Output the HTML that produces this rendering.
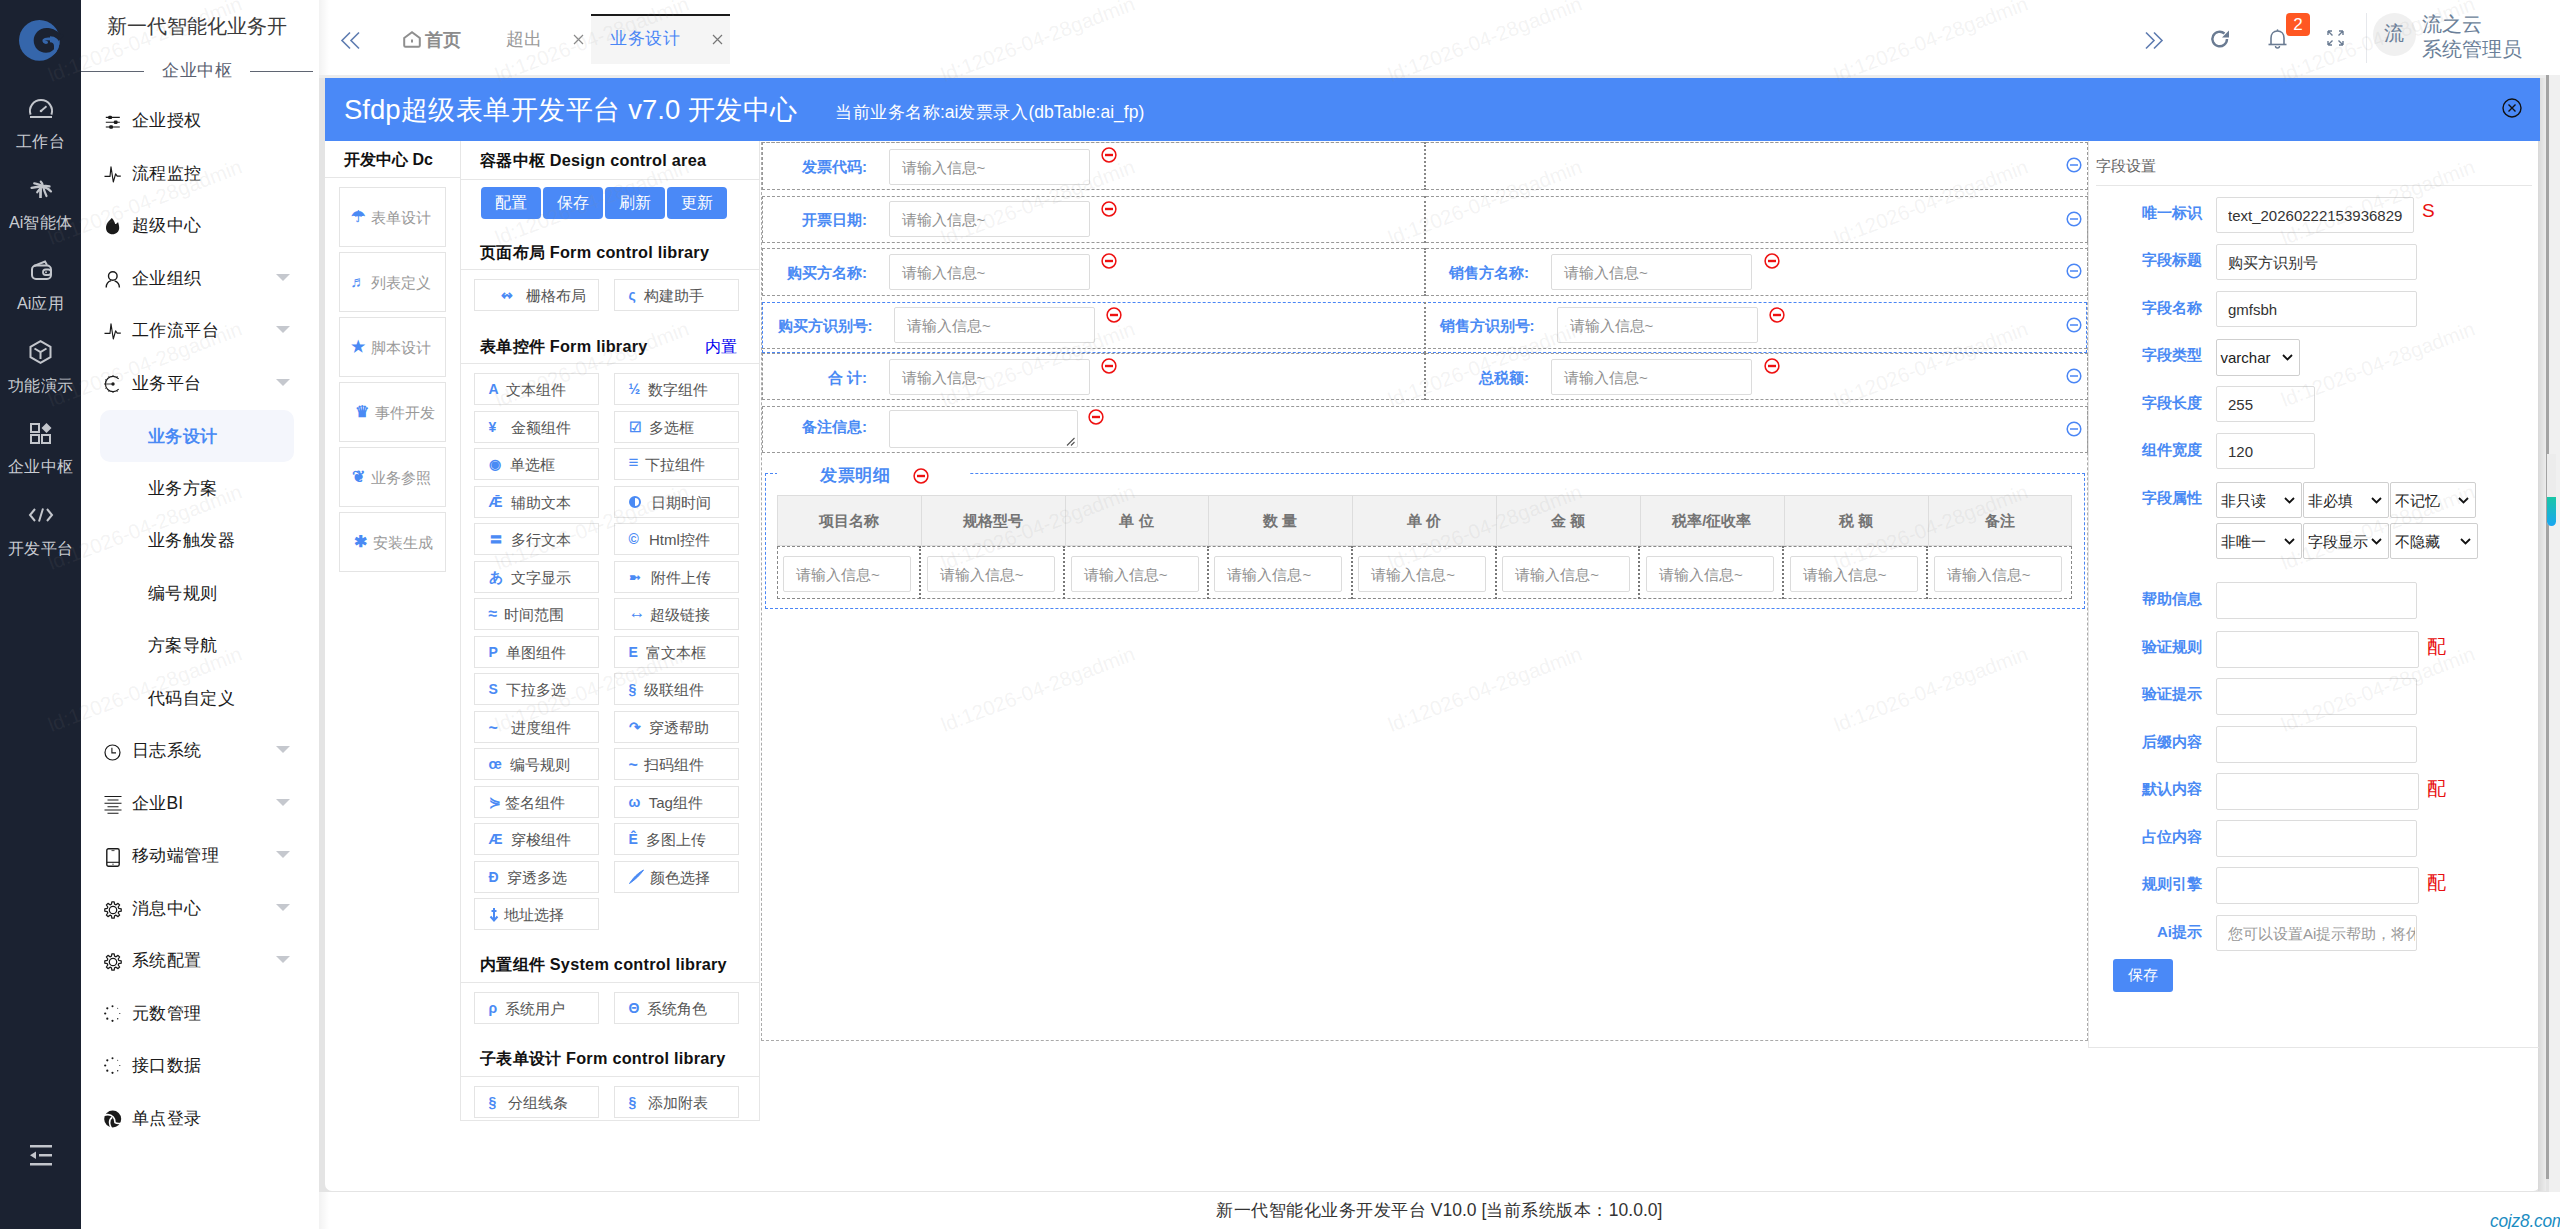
<!DOCTYPE html><html><head><meta charset="utf-8"><style>
*{box-sizing:border-box}
html,body{margin:0;padding:0}
body{width:2560px;height:1229px;overflow:hidden;position:relative;background:#fff;font-family:"Liberation Sans",sans-serif}
.t{position:absolute;white-space:nowrap}
.b{position:absolute}
svg{position:absolute;overflow:visible}
</style></head><body>
<div class="b" style="left:0px;top:0px;width:81px;height:1229px;background:#1b2231"></div>
<svg style="left:18px;top:18px" width="45" height="45" viewBox="0 0 45 45">
<defs><clipPath id="lc"><circle cx="21.4" cy="22.4" r="20.4"/></clipPath></defs>
<circle cx="21.4" cy="22.4" r="20.4" fill="#3566ab"/>
<path fill="#1b2231" d="M42.5 16.2 C38 11.5 33 10 28.5 10 C21 10 15.7 16 15.7 22.5 C15.7 29.5 21 34.8 28 34.8 C33.5 34.8 37.5 31 38.5 26 L46 17 Z"/>
<g clip-path="url(#lc)">
<path fill="none" stroke="#3566ab" stroke-width="6" d="M39 36 L39 28 C39 23.5 36 21.2 32 21.2"/>
<path fill="none" stroke="#3566ab" stroke-width="2.8" stroke-linecap="round" d="M33 21 C29.5 20.6 27 20.6 26 22 C25.3 23.3 26.5 24.8 28.6 24.4"/>
</g>
</svg>
<svg style="left:29px;top:99px" width="24" height="19" viewBox="0 0 24 19"><path d="M1.6 15.6 A11 11 0 1 1 22.4 15.6" fill="none" stroke="#c3c6cc" stroke-width="2"/><line x1="1" y1="18" x2="23" y2="18" stroke="#c3c6cc" stroke-width="2"/><line x1="12" y1="12" x2="17.5" y2="7.2" stroke="#c3c6cc" stroke-width="1.8"/><circle cx="12" cy="12" r="1.3" fill="#c3c6cc"/></svg>
<svg style="left:28px;top:176px" width="28" height="26" viewBox="0 0 28 26"><g fill="none" stroke="#c3c6cc" stroke-linecap="round">
<path d="M14.8 10.2 C11 10.5 7 11 3.6 11.8" stroke-width="2.4"/>
<path d="M14.5 9.8 C11 8.5 8.5 7.6 6.2 7.4" stroke-width="2.2"/>
<path d="M14.8 10 C14.5 8 13.8 6.5 12.8 5.6" stroke-width="2.2"/>
<path d="M14.8 10.2 C17 9.6 19.5 9.8 21.5 10.4" stroke-width="2.3"/>
<path d="M15 10.6 C18 11.5 21 13.3 23 15.4" stroke-width="2.2"/>
<path d="M14.5 10.8 C12.5 12 10.5 14 9.2 16.3" stroke-width="2.2"/>
<path d="M15.2 11 C16 14 17.3 17.5 18.5 20" stroke-width="2.2"/>
</g><path d="M11.2 12.5 L14 12.5 L13.8 22 L11.2 22Z" fill="#c3c6cc"/></svg>
<svg style="left:31px;top:260px" width="21" height="20" viewBox="0 0 21 20"><path d="M3 6 L14 1.5 L16 5" fill="none" stroke="#c3c6cc" stroke-width="2"/><rect x="1" y="5.5" width="19" height="13.5" rx="4" fill="none" stroke="#c3c6cc" stroke-width="2"/><rect x="12" y="9.5" width="8" height="5.5" rx="2.7" fill="none" stroke="#c3c6cc" stroke-width="1.8"/><circle cx="15" cy="12.2" r="1" fill="#c3c6cc"/></svg>
<svg style="left:29px;top:340px" width="23" height="24" viewBox="0 0 23 24"><path d="M11.5 1.2 L21.5 6.8 L21.5 17.2 L11.5 22.8 L1.5 17.2 L1.5 6.8 Z" fill="none" stroke="#c3c6cc" stroke-width="2"/><path d="M5.5 8.5 L11.5 12 L17.5 8.5 M11.5 12 L11.5 19" fill="none" stroke="#c3c6cc" stroke-width="2"/></svg>
<svg style="left:30px;top:423px" width="22" height="21" viewBox="0 0 22 21"><rect x="1" y="1" width="8" height="8" fill="none" stroke="#c3c6cc" stroke-width="2"/><rect x="1" y="12" width="8" height="8" fill="none" stroke="#c3c6cc" stroke-width="2"/><rect x="12" y="12" width="8" height="8" fill="none" stroke="#c3c6cc" stroke-width="2"/><path d="M16.5 0 L21.5 5 L16.5 10 L11.5 5Z" fill="#c3c6cc"/></svg>
<svg style="left:29px;top:508px" width="24" height="14" viewBox="0 0 24 14"><path d="M6 1 L1 7 L6 13 M18 1 L23 7 L18 13 M14 0.5 L10 13.5" fill="none" stroke="#c3c6cc" stroke-width="2"/></svg>
<div class="t" style="left:0;width:81px;text-align:center;top:131px;font-size:16.25px;line-height:20px;color:#c9ccd2"><span style="font-size:16px;letter-spacing:0.25px">工作台</span></div>
<div class="t" style="left:0;width:81px;text-align:center;top:212px;font-size:16.25px;line-height:20px;color:#c9ccd2">Ai<span style="font-size:16px;letter-spacing:0.25px">智能体</span></div>
<div class="t" style="left:0;width:81px;text-align:center;top:293px;font-size:16.25px;line-height:20px;color:#c9ccd2">Ai<span style="font-size:16px;letter-spacing:0.25px">应用</span></div>
<div class="t" style="left:0;width:81px;text-align:center;top:375px;font-size:16.25px;line-height:20px;color:#c9ccd2"><span style="font-size:16px;letter-spacing:0.25px">功能演示</span></div>
<div class="t" style="left:0;width:81px;text-align:center;top:456px;font-size:16.25px;line-height:20px;color:#c9ccd2"><span style="font-size:16px;letter-spacing:0.25px">企业中枢</span></div>
<div class="t" style="left:0;width:81px;text-align:center;top:538px;font-size:16.25px;line-height:20px;color:#c9ccd2"><span style="font-size:16px;letter-spacing:0.25px">开发平台</span></div>
<svg style="left:30px;top:1145px" width="22" height="21" viewBox="0 0 22 21"><rect x="0" y="0" width="22" height="2.5" fill="#c3c6cc"/><rect x="9" y="9" width="13" height="2.5" fill="#c3c6cc"/><rect x="0" y="18" width="22" height="2.5" fill="#c3c6cc"/><path d="M0 10.2 L6 6.5 L6 14Z" fill="#c3c6cc"/></svg>
<div class="t" style="left:107px;top:16px;font-size:20px;line-height:20px;color:#3a3a3a;font-weight:normal;">新一代智能化业务开</div>
<div class="t" style="left:162px;top:62px;font-size:17.5px;line-height:17.5px;color:#5a6070;font-weight:normal;"><span style="font-size:17px;letter-spacing:0.5px">企业中枢</span></div>
<div class="b" style="left:81px;top:70.5px;width:63px;height:1.3px;background:#5f6572"></div>
<div class="b" style="left:250px;top:70.5px;width:63px;height:1.3px;background:#5f6572"></div>
<svg style="left:104px;top:114px" width="17" height="16" viewBox="0 0 17 16"><path d="M1.8 3.4H15.8 M1.8 8.2H15.8" stroke="#1a1a1a" stroke-width="1.1"/><path d="M1.8 13H15.8" stroke="#666" stroke-width="1.6"/><rect x="4.2" y="1.7" width="3.8" height="3.4" rx="1.2" fill="#1a1a1a"/><rect x="9.8" y="6.5" width="3.8" height="3.4" rx="1.2" fill="#1a1a1a"/><rect x="5.2" y="11.3" width="3.8" height="3.4" rx="1.2" fill="#1a1a1a"/></svg>
<div class="t" style="left:131.5px;top:110px;font-size:17.5px;line-height:17.5px;color:#1a1a1a;font-weight:normal;line-height:20px"><span style="font-size:17px;letter-spacing:0.5px">企业授权</span></div>
<svg style="left:104px;top:165.5px" width="18" height="18" viewBox="0 0 18 18"><path d="M0.5 10.4 H6 L7 0.8 L9.3 16 L11.6 7.8 L13.2 10.1 H16.8" fill="none" stroke="#1a1a1a" stroke-width="1.15" stroke-linejoin="round"/></svg>
<div class="t" style="left:131.5px;top:162.5px;font-size:17.5px;line-height:17.5px;color:#1a1a1a;font-weight:normal;line-height:20px"><span style="font-size:17px;letter-spacing:0.5px">流程监控</span></div>
<svg style="left:105px;top:216.5px" width="16" height="18" viewBox="0 0 16 18"><path d="M6.8 1 C4.5 3.5 1 6 1 11 C1 14.8 4 17.3 7.5 17.3 C11 17.3 14.2 14.8 14.2 11 C14.2 8.5 13.5 6.5 13 5 C12 6.5 11.2 7 10.2 7 C9.5 4.5 8.5 2.5 6.8 1Z" fill="#1a1a1a"/></svg>
<div class="t" style="left:131.5px;top:215px;font-size:17.5px;line-height:17.5px;color:#1a1a1a;font-weight:normal;line-height:20px"><span style="font-size:17px;letter-spacing:0.5px">超级中心</span></div>
<svg style="left:104px;top:269.5px" width="17" height="18" viewBox="0 0 17 18"><circle cx="8.8" cy="6" r="4.3" fill="none" stroke="#1a1a1a" stroke-width="1.4"/><path d="M2.2 17.5 C2.2 13.8 4.2 11.4 7.2 10.6 M10.6 10.8 C13.5 11.7 15.4 14 15.4 17.5" fill="none" stroke="#1a1a1a" stroke-width="1.4"/></svg>
<div class="t" style="left:131.5px;top:267.5px;font-size:17.5px;line-height:17.5px;color:#1a1a1a;font-weight:normal;line-height:20px"><span style="font-size:17px;letter-spacing:0.5px">企业组织</span></div>
<svg style="left:276px;top:273.5px" width="14" height="8" viewBox="0 0 14 8"><path d="M0 0H14L7 7Z" fill="#c5c8ce"/></svg>
<svg style="left:104px;top:323px" width="18" height="18" viewBox="0 0 18 18"><path d="M0.5 10.4 H6 L7 0.8 L9.3 16 L11.6 7.8 L13.2 10.1 H16.8" fill="none" stroke="#1a1a1a" stroke-width="1.15" stroke-linejoin="round"/></svg>
<div class="t" style="left:131.5px;top:320px;font-size:17.5px;line-height:17.5px;color:#1a1a1a;font-weight:normal;line-height:20px"><span style="font-size:17px;letter-spacing:0.5px">工作流平台</span></div>
<svg style="left:276px;top:326px" width="14" height="8" viewBox="0 0 14 8"><path d="M0 0H14L7 7Z" fill="#c5c8ce"/></svg>
<svg style="left:104px;top:375.0px" width="18" height="18" viewBox="0 0 18 18"><path d="M14.65 3.91 A7.6 7.6 0 1 0 14.65 14.09" fill="none" stroke="#1a1a1a" stroke-width="1.2"/><path d="M12.80 15.58L13.50 16.79M9.00 16.60L9.00 18.00M5.20 15.58L4.50 16.79M2.42 12.80L1.21 13.50M1.40 9.00L0.00 9.00M2.42 5.20L1.21 4.50M5.20 2.42L4.50 1.21M9.00 1.40L9.00 0.00M12.80 2.42L13.50 1.21" stroke="#1a1a1a" stroke-width="0.8"/><path d="M1.6 9H9" stroke="#1a1a1a" stroke-width="0.9"/><circle cx="9" cy="9" r="1.7" fill="#1a1a1a"/></svg>
<div class="t" style="left:131.5px;top:372.5px;font-size:17.5px;line-height:17.5px;color:#1a1a1a;font-weight:normal;line-height:20px"><span style="font-size:17px;letter-spacing:0.5px">业务平台</span></div>
<svg style="left:276px;top:378.5px" width="14" height="8" viewBox="0 0 14 8"><path d="M0 0H14L7 7Z" fill="#c5c8ce"/></svg>
<svg style="left:104px;top:743.5px" width="17" height="17" viewBox="0 0 17 17"><circle cx="8.5" cy="8.5" r="7.5" fill="none" stroke="#1a1a1a" stroke-width="1.2"/><path d="M7.9 3.8V8.9H12" fill="none" stroke="#1a1a1a" stroke-width="1.1"/></svg>
<div class="t" style="left:131.5px;top:740px;font-size:17.5px;line-height:17.5px;color:#1a1a1a;font-weight:normal;line-height:20px"><span style="font-size:17px;letter-spacing:0.5px">日志系统</span></div>
<svg style="left:276px;top:746px" width="14" height="8" viewBox="0 0 14 8"><path d="M0 0H14L7 7Z" fill="#c5c8ce"/></svg>
<svg style="left:104px;top:794.5px" width="18" height="19" viewBox="0 0 18 19"><path d="M0.5 1.5H17.5 M3.5 5H14.5 M0.5 8.3H17.5 M3.5 11.7H14.5 M0.5 15H17.5 M3.5 18.3H14.5" stroke="#1a1a1a" stroke-width="1.1"/></svg>
<div class="t" style="left:131.5px;top:792.5px;font-size:17.5px;line-height:17.5px;color:#1a1a1a;font-weight:normal;line-height:20px"><span style="font-size:17px;letter-spacing:0.5px">企业</span>BI</div>
<svg style="left:276px;top:798.5px" width="14" height="8" viewBox="0 0 14 8"><path d="M0 0H14L7 7Z" fill="#c5c8ce"/></svg>
<svg style="left:106px;top:847.5px" width="14" height="19" viewBox="0 0 14 19"><rect x="0.8" y="0.8" width="12.4" height="17.4" rx="1.6" fill="none" stroke="#1a1a1a" stroke-width="1.4"/><path d="M1 14.3H13" stroke="#1a1a1a" stroke-width="1.1"/><path d="M5.5 2.6H8.5" stroke="#1a1a1a" stroke-width="0.8"/><circle cx="7" cy="16.2" r="0.6" fill="#1a1a1a"/></svg>
<div class="t" style="left:131.5px;top:845px;font-size:17.5px;line-height:17.5px;color:#1a1a1a;font-weight:normal;line-height:20px"><span style="font-size:17px;letter-spacing:0.5px">移动端管理</span></div>
<svg style="left:276px;top:851px" width="14" height="8" viewBox="0 0 14 8"><path d="M0 0H14L7 7Z" fill="#c5c8ce"/></svg>
<svg style="left:103px;top:899.5px" width="20" height="20" viewBox="0 0 20 20"><path d="M8.45 4.20 L8.84 1.78 L11.16 1.78 L11.55 4.20 L13.00 4.80 L15.00 3.37 L16.63 5.00 L15.20 7.00 L15.80 8.45 L18.22 8.84 L18.22 11.16 L15.80 11.55 L15.20 13.00 L16.63 15.00 L15.00 16.63 L13.00 15.20 L11.55 15.80 L11.16 18.22 L8.84 18.22 L8.45 15.80 L7.00 15.20 L5.00 16.63 L3.37 15.00 L4.80 13.00 L4.20 11.55 L1.78 11.16 L1.78 8.84 L4.20 8.45 L4.80 7.00 L3.37 5.00 L5.00 3.37 L7.00 4.80Z" fill="none" stroke="#1a1a1a" stroke-width="1.25" stroke-linejoin="round"/><circle cx="10" cy="10" r="3.7" fill="none" stroke="#1a1a1a" stroke-width="1.25"/></svg>
<div class="t" style="left:131.5px;top:897.5px;font-size:17.5px;line-height:17.5px;color:#1a1a1a;font-weight:normal;line-height:20px"><span style="font-size:17px;letter-spacing:0.5px">消息中心</span></div>
<svg style="left:276px;top:903.5px" width="14" height="8" viewBox="0 0 14 8"><path d="M0 0H14L7 7Z" fill="#c5c8ce"/></svg>
<svg style="left:103px;top:952px" width="20" height="20" viewBox="0 0 20 20"><path d="M8.45 4.20 L8.84 1.78 L11.16 1.78 L11.55 4.20 L13.00 4.80 L15.00 3.37 L16.63 5.00 L15.20 7.00 L15.80 8.45 L18.22 8.84 L18.22 11.16 L15.80 11.55 L15.20 13.00 L16.63 15.00 L15.00 16.63 L13.00 15.20 L11.55 15.80 L11.16 18.22 L8.84 18.22 L8.45 15.80 L7.00 15.20 L5.00 16.63 L3.37 15.00 L4.80 13.00 L4.20 11.55 L1.78 11.16 L1.78 8.84 L4.20 8.45 L4.80 7.00 L3.37 5.00 L5.00 3.37 L7.00 4.80Z" fill="none" stroke="#1a1a1a" stroke-width="1.25" stroke-linejoin="round"/><circle cx="10" cy="10" r="3.7" fill="none" stroke="#1a1a1a" stroke-width="1.25"/></svg>
<div class="t" style="left:131.5px;top:950px;font-size:17.5px;line-height:17.5px;color:#1a1a1a;font-weight:normal;line-height:20px"><span style="font-size:17px;letter-spacing:0.5px">系统配置</span></div>
<svg style="left:276px;top:956px" width="14" height="8" viewBox="0 0 14 8"><path d="M0 0H14L7 7Z" fill="#c5c8ce"/></svg>
<svg style="left:104px;top:1004.5px" width="17" height="17" viewBox="0 0 17 17"><g fill="#1a1a1a"><circle cx="8.5" cy="1.2" r="1"/><circle cx="3.3" cy="3.3" r="1.1"/><circle cx="1.2" cy="8.5" r="1.1"/><circle cx="3.3" cy="13.7" r="1.1"/><circle cx="8.5" cy="15.8" r="1.1"/><circle cx="13.7" cy="13.7" r="0.7"/><circle cx="15.8" cy="8.5" r="0.6"/><circle cx="13.7" cy="3.3" r="0.5"/></g></svg>
<div class="t" style="left:131.5px;top:1002.5px;font-size:17.5px;line-height:17.5px;color:#1a1a1a;font-weight:normal;line-height:20px"><span style="font-size:17px;letter-spacing:0.5px">元数管理</span></div>
<svg style="left:104px;top:1057px" width="17" height="17" viewBox="0 0 17 17"><g fill="#1a1a1a"><circle cx="8.5" cy="1.2" r="1"/><circle cx="3.3" cy="3.3" r="1.1"/><circle cx="1.2" cy="8.5" r="1.1"/><circle cx="3.3" cy="13.7" r="1.1"/><circle cx="8.5" cy="15.8" r="1.1"/><circle cx="13.7" cy="13.7" r="0.7"/><circle cx="15.8" cy="8.5" r="0.6"/><circle cx="13.7" cy="3.3" r="0.5"/></g></svg>
<div class="t" style="left:131.5px;top:1055px;font-size:17.5px;line-height:17.5px;color:#1a1a1a;font-weight:normal;line-height:20px"><span style="font-size:17px;letter-spacing:0.5px">接口数据</span></div>
<svg style="left:98px;top:1103.0px" width="30" height="30" viewBox="0 0 30 30"><circle cx="14.7" cy="16.1" r="8.5" fill="#1a1a1a"/><path d="M5.5 12.6 C9 11.2 13 11.6 15.2 14 C17 16 16.8 18 17 19.6 C18.5 20.6 21 20.6 24 20.2" fill="none" stroke="#fff" stroke-width="1.6"/><path d="M14.2 14.4 C12.3 15.5 11.4 17.5 11.6 20 C11.8 22 12.4 23.5 13.3 25.2" fill="none" stroke="#fff" stroke-width="1.6"/></svg>
<div class="t" style="left:131.5px;top:1107.5px;font-size:17.5px;line-height:17.5px;color:#1a1a1a;font-weight:normal;line-height:20px"><span style="font-size:17px;letter-spacing:0.5px">单点登录</span></div>
<div class="b" style="left:100px;top:410px;width:194px;height:52px;background:#f4f6fc;border-radius:10px"></div>
<div class="t" style="left:147.5px;top:426px;font-size:17.5px;line-height:17.5px;color:#4a8af4;font-weight:bold;line-height:20px"><span style="font-size:17px;letter-spacing:0.5px">业务设计</span></div>
<div class="t" style="left:147.5px;top:477.5px;font-size:17.5px;line-height:17.5px;color:#1a1a1a;font-weight:normal;line-height:20px"><span style="font-size:17px;letter-spacing:0.5px">业务方案</span></div>
<div class="t" style="left:147.5px;top:530px;font-size:17.5px;line-height:17.5px;color:#1a1a1a;font-weight:normal;line-height:20px"><span style="font-size:17px;letter-spacing:0.5px">业务触发器</span></div>
<div class="t" style="left:147.5px;top:582.5px;font-size:17.5px;line-height:17.5px;color:#1a1a1a;font-weight:normal;line-height:20px"><span style="font-size:17px;letter-spacing:0.5px">编号规则</span></div>
<div class="t" style="left:147.5px;top:635px;font-size:17.5px;line-height:17.5px;color:#1a1a1a;font-weight:normal;line-height:20px"><span style="font-size:17px;letter-spacing:0.5px">方案导航</span></div>
<div class="t" style="left:147.5px;top:687.5px;font-size:17.5px;line-height:17.5px;color:#1a1a1a;font-weight:normal;line-height:20px"><span style="font-size:17px;letter-spacing:0.5px">代码自定义</span></div>
<div class="b" style="left:319px;top:0;width:10px;height:1229px;background:linear-gradient(90deg,rgba(0,0,0,0.05),rgba(0,0,0,0))"></div>
<svg style="left:341px;top:32px" width="19" height="17" viewBox="0 0 19 17"><path d="M9 0.5 L1 8.5 L9 16.5 M18 0.5 L10 8.5 L18 16.5" fill="none" stroke="#5e7cb0" stroke-width="1.6"/></svg>
<svg style="left:403px;top:31px" width="18" height="17" viewBox="0 0 18 17"><path d="M1.2 7 L9 1.2 L16.8 7 V14.5 Q16.8 15.8 15.5 15.8 H2.5 Q1.2 15.8 1.2 14.5Z" fill="none" stroke="#8f8f8f" stroke-width="2"/><path d="M9 8.5V11.5" stroke="#8f8f8f" stroke-width="2"/></svg>
<div class="t" style="left:425px;top:29.5px;font-size:18px;line-height:18px;color:#8c8c8c;font-weight:bold;line-height:20px">首页</div>
<div class="t" style="left:505.5px;top:28.5px;font-size:18.5px;line-height:18.5px;color:#9a9a9a;font-weight:normal;line-height:20px"><span style="font-size:18px;letter-spacing:0.5px">超出</span></div>
<svg style="left:573px;top:34px" width="11" height="11" viewBox="0 0 11 11"><path d="M1 1L10 10M10 1L1 10" stroke="#8a8a8a" stroke-width="1.2"/></svg>
<div class="b" style="left:591px;top:14px;width:139px;height:50px;background:#f5f5f5;border-top:2px solid #1a1a1a"></div>
<div class="t" style="left:610px;top:27.5px;font-size:17.5px;line-height:17.5px;color:#4a86f5;font-weight:normal;line-height:20px"><span style="font-size:17px;letter-spacing:0.5px">业务设计</span></div>
<svg style="left:712px;top:34px" width="11" height="11" viewBox="0 0 11 11"><path d="M1 1L10 10M10 1L1 10" stroke="#777" stroke-width="1.2"/></svg>
<svg style="left:2145px;top:32px" width="18" height="17" viewBox="0 0 18 17"><path d="M1 0.5 L9 8.5 L1 16.5 M9 0.5 L17 8.5 L9 16.5" fill="none" stroke="#5e7cb0" stroke-width="1.6"/></svg>
<svg style="left:2211px;top:30px" width="19" height="18" viewBox="0 0 19 18"><path d="M16 9 A7.3 7.3 0 1 1 13.5 3.5" fill="none" stroke="#6a7b92" stroke-width="2.4"/><path d="M18 0.5 V7.5 H11Z" fill="#6a7b92"/></svg>
<svg style="left:2268px;top:29px" width="19" height="20" viewBox="0 0 19 20"><path d="M3 15.5 V9 C3 5 5.5 2 9.5 2 C13.5 2 16 5 16 9 V15.5" fill="none" stroke="#6a7b92" stroke-width="1.6"/><path d="M0.5 15.5H18.5" stroke="#6a7b92" stroke-width="1.6"/><path d="M7.5 17 A2 2 0 0 0 11.5 17" fill="none" stroke="#6a7b92" stroke-width="1.4"/><circle cx="9.5" cy="1.2" r="0.9" fill="#6a7b92"/></svg>
<div class="b" style="left:2286px;top:13px;width:24px;height:23px;background:#ff5722;border-radius:4px"></div>
<div class="t" style="left:2286px;top:15px;font-size:17px;line-height:17px;color:#fff;font-weight:normal;width:24px;text-align:center;line-height:19px">2</div>
<svg style="left:2327px;top:30px" width="17" height="16" viewBox="0 0 17 16"><path d="M1 1 L5.5 5.5 M1 1 H5 M1 1 V5 M16 1 L11.5 5.5 M16 1 H12 M16 1 V5 M1 15 L5.5 10.5 M1 15 H5 M1 15 V11 M16 15 L11.5 10.5 M16 15 H12 M16 15 V11" fill="none" stroke="#6a7b92" stroke-width="1.4"/></svg>
<div class="b" style="left:2366px;top:13px;width:1px;height:50px;background:#e6e8ec"></div>
<div class="b" style="left:2372.5px;top:13px;width:43px;height:43px;background:#f0f0f0;border-radius:50%"></div>
<div class="t" style="left:2384px;top:23px;font-size:20px;line-height:20px;color:#6b7f99;font-weight:normal;line-height:21px">流</div>
<div class="t" style="left:2422px;top:14px;font-size:20px;line-height:20px;color:#6b7f99;font-weight:normal;line-height:21px">流之云</div>
<div class="t" style="left:2422px;top:39px;font-size:20px;line-height:20px;color:#6b7f99;font-weight:normal;line-height:21px">系统管理员</div>
<div class="b" style="left:319px;top:75px;width:2230px;height:1117px;background:#e4e4e4"></div>
<div class="b" style="left:319px;top:75px;width:2230px;height:3px;background:#ececec"></div>
<div class="b" style="left:325px;top:78px;width:2215px;height:1113px;background:#fff;border-radius:0 0 7px 7px"></div>
<div class="b" style="left:2538px;top:78px;width:8px;height:1113px;background:linear-gradient(90deg,#d8d8d8,#ececec)"></div>
<div class="b" style="left:2546px;top:75px;width:3px;height:1104px;background:#a3a3a3"></div>
<div class="b" style="left:2549px;top:75px;width:11px;height:1117px;background:#f0f0f0"></div>
<div class="b" style="left:2547px;top:454px;width:9px;height:72px;background:#ececec;border-radius:0 0 5px 5px"></div>
<div class="b" style="left:2547px;top:497px;width:9px;height:29px;background:linear-gradient(180deg,#19c6a6,#1aa6f2);border-radius:0 0 5px 5px"></div>
<div class="b" style="left:325px;top:78px;width:2215px;height:63px;background:#4a89f7"></div>
<div class="t" style="left:344px;top:94.5px;font-size:27.5px;line-height:27.5px;color:#fff;font-weight:normal;line-height:30px">Sfdp<span style="font-size:27px;letter-spacing:0.5px">超级表单开发平台</span> v7.0 <span style="font-size:27px;letter-spacing:0.5px">开发中心</span></div>
<div class="t" style="left:835px;top:100.5px;font-size:17.5px;line-height:17.5px;color:#fff;font-weight:normal;line-height:22px"><span style="font-size:17px;letter-spacing:0.5px">当前业务名称</span>:ai<span style="font-size:17px;letter-spacing:0.5px">发票录入</span>(dbTable:ai_fp)</div>
<svg style="left:2502px;top:98px" width="20" height="20" viewBox="0 0 20 20"><circle cx="10" cy="10" r="9" fill="none" stroke="#111" stroke-width="1.4"/><path d="M6.5 6.5L13.5 13.5M13.5 6.5L6.5 13.5" stroke="#111" stroke-width="1.4"/></svg>
<div class="t" style="left:1216px;top:1199px;font-size:17.5px;line-height:17.5px;color:#333;font-weight:normal;line-height:22px"><span style="font-size:17px;letter-spacing:0.5px">新一代智能化业务开发平台</span> V10.0 [<span style="font-size:17px;letter-spacing:0.5px">当前系统版本：</span>10.0.0]</div>
<div class="t" style="left:2490px;top:1210px;font-size:18px;line-height:18px;color:#1b8dc2;font-weight:normal;font-style:italic;line-height:22px;letter-spacing:-0.2px;transform:scaleX(0.96);transform-origin:0 0">cojz8.com</div>
<div class="t" style="left:344px;top:151px;font-size:16px;line-height:16px;color:#111;font-weight:bold;line-height:18px">开发中心 Dc</div>
<div class="b" style="left:325px;top:177px;width:135px;height:1px;background:#e6e6e6"></div>
<div class="b" style="left:338.5px;top:187px;width:107.5px;height:59.5px;border:1px solid #e4e4e4"></div>
<div class="t" style="left:371px;top:209px;font-size:15px;line-height:15px;color:#999;font-weight:normal;line-height:17px">表单设计</div>
<div class="t" style="left:349px;top:208px;font-size:15.5px;line-height:18px;color:#4a8af4;font-weight:bold;width:18px;text-align:center">☂</div>
<div class="b" style="left:338.5px;top:252px;width:107.5px;height:59.5px;border:1px solid #e4e4e4"></div>
<div class="t" style="left:371px;top:274px;font-size:15px;line-height:15px;color:#999;font-weight:normal;line-height:17px">列表定义</div>
<div class="t" style="left:349px;top:273px;font-size:15.5px;line-height:18px;color:#4a8af4;font-weight:bold;width:18px;text-align:center">♬</div>
<div class="b" style="left:338.5px;top:317px;width:107.5px;height:59.5px;border:1px solid #e4e4e4"></div>
<div class="t" style="left:371px;top:339px;font-size:15px;line-height:15px;color:#999;font-weight:normal;line-height:17px">脚本设计</div>
<div class="t" style="left:349px;top:338px;font-size:15.5px;line-height:18px;color:#4a8af4;font-weight:bold;width:18px;text-align:center">★</div>
<div class="b" style="left:338.5px;top:382px;width:107.5px;height:59.5px;border:1px solid #e4e4e4"></div>
<div class="t" style="left:375px;top:404px;font-size:15px;line-height:15px;color:#999;font-weight:normal;line-height:17px">事件开发</div>
<div class="t" style="left:353px;top:403px;font-size:15.5px;line-height:18px;color:#4a8af4;font-weight:bold;width:18px;text-align:center">♛</div>
<div class="b" style="left:338.5px;top:447px;width:107.5px;height:59.5px;border:1px solid #e4e4e4"></div>
<div class="t" style="left:371px;top:469px;font-size:15px;line-height:15px;color:#999;font-weight:normal;line-height:17px">业务参照</div>
<div class="t" style="left:349px;top:468px;font-size:15.5px;line-height:18px;color:#4a8af4;font-weight:bold;width:18px;text-align:center">❦</div>
<div class="b" style="left:338.5px;top:512px;width:107.5px;height:59.5px;border:1px solid #e4e4e4"></div>
<div class="t" style="left:373px;top:534px;font-size:15px;line-height:15px;color:#999;font-weight:normal;line-height:17px">安装生成</div>
<div class="t" style="left:351px;top:533px;font-size:15.5px;line-height:18px;color:#4a8af4;font-weight:bold;width:18px;text-align:center">✱</div>
<div class="b" style="left:460px;top:141px;width:300px;height:980px;border-left:1px solid #e6e6e6;border-right:1px solid #e6e6e6;border-bottom:1px solid #e6e6e6"></div>
<div class="t" style="left:480px;top:151px;font-size:16.25px;line-height:16.25px;color:#111;font-weight:bold;line-height:18px;letter-spacing:0.25px"><span style="font-size:16px;letter-spacing:0.25px">容器中枢</span> Design control area</div>
<div class="b" style="left:461px;top:179px;width:298px;height:1px;background:#e6e6e6"></div>
<div class="b" style="left:481px;top:187px;width:60px;height:32px;background:#4a89f7;border-radius:4px"></div>
<div class="t" style="left:481px;top:194px;font-size:16px;line-height:16px;color:#fff;font-weight:normal;width:60px;text-align:center;line-height:18px">配置</div>
<div class="b" style="left:543px;top:187px;width:60px;height:32px;background:#4a89f7;border-radius:4px"></div>
<div class="t" style="left:543px;top:194px;font-size:16px;line-height:16px;color:#fff;font-weight:normal;width:60px;text-align:center;line-height:18px">保存</div>
<div class="b" style="left:605px;top:187px;width:60px;height:32px;background:#4a89f7;border-radius:4px"></div>
<div class="t" style="left:605px;top:194px;font-size:16px;line-height:16px;color:#fff;font-weight:normal;width:60px;text-align:center;line-height:18px">刷新</div>
<div class="b" style="left:667px;top:187px;width:60px;height:32px;background:#4a89f7;border-radius:4px"></div>
<div class="t" style="left:667px;top:194px;font-size:16px;line-height:16px;color:#fff;font-weight:normal;width:60px;text-align:center;line-height:18px">更新</div>
<div class="t" style="left:480px;top:242.5px;font-size:16.25px;line-height:16.25px;color:#111;font-weight:bold;line-height:18px;letter-spacing:0.25px"><span style="font-size:16px;letter-spacing:0.25px">页面布局</span> Form control library</div>
<div class="b" style="left:461px;top:269px;width:298px;height:1px;background:#e6e6e6"></div>
<div class="b" style="left:474px;top:279px;width:124.5px;height:32px;border:1px solid #e4e4e4"></div>
<div class="t" style="left:501px;top:286px;font-size:14px;line-height:18px;color:#4a8af4;font-weight:bold">↭</div>
<div class="t" style="left:526.2px;top:287px;font-size:15px;line-height:15px;color:#555;font-weight:normal;line-height:17px">栅格布局</div>
<div class="b" style="left:614px;top:279px;width:124.5px;height:32px;border:1px solid #e4e4e4"></div>
<div class="t" style="left:628.5px;top:286px;font-size:14px;line-height:18px;color:#4a8af4;font-weight:bold">ς</div>
<div class="t" style="left:643.8px;top:287px;font-size:15px;line-height:15px;color:#555;font-weight:normal;line-height:17px">构建助手</div>
<div class="t" style="left:480px;top:336.5px;font-size:16.25px;line-height:16.25px;color:#111;font-weight:bold;line-height:18px;letter-spacing:0.25px"><span style="font-size:16px;letter-spacing:0.25px">表单控件</span> Form library</div>
<div class="b" style="left:461px;top:363px;width:298px;height:1px;background:#e6e6e6"></div>
<div class="t" style="left:705px;top:337.5px;font-size:16px;line-height:16px;color:#0000ee;font-weight:normal;line-height:18px">内置</div>
<div class="b" style="left:474px;top:373.0px;width:124.5px;height:32px;border:1px solid #e4e4e4"></div>
<div class="t" style="left:488.5px;top:380.0px;font-size:14px;line-height:18px;color:#4a8af4;font-weight:bold">A</div>
<div class="t" style="left:506.4px;top:381.0px;font-size:15px;line-height:15px;color:#555;font-weight:normal;line-height:17px">文本组件</div>
<div class="b" style="left:614px;top:373.0px;width:124.5px;height:32px;border:1px solid #e4e4e4"></div>
<div class="t" style="left:628.5px;top:380.0px;font-size:14px;line-height:18px;color:#4a8af4;font-weight:bold">½</div>
<div class="t" style="left:648px;top:381.0px;font-size:15px;line-height:15px;color:#555;font-weight:normal;line-height:17px">数字组件</div>
<div class="b" style="left:474px;top:410.5px;width:124.5px;height:32px;border:1px solid #e4e4e4"></div>
<div class="t" style="left:488.5px;top:417.5px;font-size:14px;line-height:18px;color:#4a8af4;font-weight:bold">¥</div>
<div class="t" style="left:510.8px;top:418.5px;font-size:15px;line-height:15px;color:#555;font-weight:normal;line-height:17px">金额组件</div>
<div class="b" style="left:614px;top:410.5px;width:124.5px;height:32px;border:1px solid #e4e4e4"></div>
<div class="t" style="left:628.5px;top:417.5px;font-size:14px;line-height:18px;color:#4a8af4;font-weight:bold">☑</div>
<div class="t" style="left:648.8px;top:418.5px;font-size:15px;line-height:15px;color:#555;font-weight:normal;line-height:17px">多选框</div>
<div class="b" style="left:474px;top:448.0px;width:124.5px;height:32px;border:1px solid #e4e4e4"></div>
<div class="t" style="left:488.5px;top:455.0px;font-size:14px;line-height:18px;color:#4a8af4;font-weight:bold">◉</div>
<div class="t" style="left:509.8px;top:456.0px;font-size:15px;line-height:15px;color:#555;font-weight:normal;line-height:17px">单选框</div>
<div class="b" style="left:614px;top:448.0px;width:124.5px;height:32px;border:1px solid #e4e4e4"></div>
<div class="t" style="left:628.5px;top:454.0px;font-size:17px;line-height:18px;color:#4a8af4;font-weight:bold">≡</div>
<div class="t" style="left:645px;top:456.0px;font-size:15px;line-height:15px;color:#555;font-weight:normal;line-height:17px">下拉组件</div>
<div class="b" style="left:474px;top:485.5px;width:124.5px;height:32px;border:1px solid #e4e4e4"></div>
<div class="t" style="left:488.5px;top:492.5px;font-size:14px;line-height:18px;color:#4a8af4;font-weight:bold">Ǣ</div>
<div class="t" style="left:510.6px;top:493.5px;font-size:15px;line-height:15px;color:#555;font-weight:normal;line-height:17px">辅助文本</div>
<div class="b" style="left:614px;top:485.5px;width:124.5px;height:32px;border:1px solid #e4e4e4"></div>
<svg style="left:628.5px;top:495.5px" width="12" height="12" viewBox="0 0 12 12"><circle cx="6" cy="6" r="5" fill="none" stroke="#4a8af4" stroke-width="2"/><path d="M6 1 A5 5 0 0 0 6 11Z" fill="#4a8af4"/></svg>
<div class="t" style="left:650.8px;top:493.5px;font-size:15px;line-height:15px;color:#555;font-weight:normal;line-height:17px">日期时间</div>
<div class="b" style="left:474px;top:523.0px;width:124.5px;height:32px;border:1px solid #e4e4e4"></div>
<div class="t" style="left:488.5px;top:530.0px;font-size:14px;line-height:18px;color:#4a8af4;font-weight:bold">〓</div>
<div class="t" style="left:511px;top:531.0px;font-size:15px;line-height:15px;color:#555;font-weight:normal;line-height:17px">多行文本</div>
<div class="b" style="left:614px;top:523.0px;width:124.5px;height:32px;border:1px solid #e4e4e4"></div>
<div class="t" style="left:628.5px;top:530.0px;font-size:14px;line-height:18px;color:#4a8af4;font-weight:bold">©</div>
<div class="t" style="left:649px;top:531.0px;font-size:15px;line-height:15px;color:#555;font-weight:normal;line-height:17px">Html控件</div>
<div class="b" style="left:474px;top:560.5px;width:124.5px;height:32px;border:1px solid #e4e4e4"></div>
<div class="t" style="left:488.5px;top:567.5px;font-size:14px;line-height:18px;color:#4a8af4;font-weight:bold">あ</div>
<div class="t" style="left:510.6px;top:568.5px;font-size:15px;line-height:15px;color:#555;font-weight:normal;line-height:17px">文字显示</div>
<div class="b" style="left:614px;top:560.5px;width:124.5px;height:32px;border:1px solid #e4e4e4"></div>
<div class="t" style="left:628.5px;top:567.5px;font-size:14px;line-height:18px;color:#4a8af4;font-weight:bold">➼</div>
<div class="t" style="left:650.8px;top:568.5px;font-size:15px;line-height:15px;color:#555;font-weight:normal;line-height:17px">附件上传</div>
<div class="b" style="left:474px;top:598.0px;width:124.5px;height:32px;border:1px solid #e4e4e4"></div>
<div class="t" style="left:488.5px;top:605.0px;font-size:16px;line-height:18px;color:#4a8af4;font-weight:bold">≈</div>
<div class="t" style="left:504px;top:606.0px;font-size:15px;line-height:15px;color:#555;font-weight:normal;line-height:17px">时间范围</div>
<div class="b" style="left:614px;top:598.0px;width:124.5px;height:32px;border:1px solid #e4e4e4"></div>
<div class="t" style="left:628.5px;top:604.0px;font-size:17px;line-height:18px;color:#4a8af4;font-weight:bold">↔</div>
<div class="t" style="left:650.3px;top:606.0px;font-size:15px;line-height:15px;color:#555;font-weight:normal;line-height:17px">超级链接</div>
<div class="b" style="left:474px;top:635.5px;width:124.5px;height:32px;border:1px solid #e4e4e4"></div>
<div class="t" style="left:488.5px;top:642.5px;font-size:14px;line-height:18px;color:#4a8af4;font-weight:bold">P</div>
<div class="t" style="left:506px;top:643.5px;font-size:15px;line-height:15px;color:#555;font-weight:normal;line-height:17px">单图组件</div>
<div class="b" style="left:614px;top:635.5px;width:124.5px;height:32px;border:1px solid #e4e4e4"></div>
<div class="t" style="left:628.5px;top:642.5px;font-size:14px;line-height:18px;color:#4a8af4;font-weight:bold">E</div>
<div class="t" style="left:646px;top:643.5px;font-size:15px;line-height:15px;color:#555;font-weight:normal;line-height:17px">富文本框</div>
<div class="b" style="left:474px;top:673.0px;width:124.5px;height:32px;border:1px solid #e4e4e4"></div>
<div class="t" style="left:488.5px;top:680.0px;font-size:14px;line-height:18px;color:#4a8af4;font-weight:bold">S</div>
<div class="t" style="left:506px;top:681.0px;font-size:15px;line-height:15px;color:#555;font-weight:normal;line-height:17px">下拉多选</div>
<div class="b" style="left:614px;top:673.0px;width:124.5px;height:32px;border:1px solid #e4e4e4"></div>
<div class="t" style="left:628.5px;top:680.0px;font-size:14px;line-height:18px;color:#4a8af4;font-weight:bold">§</div>
<div class="t" style="left:644px;top:681.0px;font-size:15px;line-height:15px;color:#555;font-weight:normal;line-height:17px">级联组件</div>
<div class="b" style="left:474px;top:710.5px;width:124.5px;height:32px;border:1px solid #e4e4e4"></div>
<div class="t" style="left:488.5px;top:718.5px;font-size:16px;line-height:18px;color:#4a8af4;font-weight:bold">~</div>
<div class="t" style="left:510.6px;top:718.5px;font-size:15px;line-height:15px;color:#555;font-weight:normal;line-height:17px">进度组件</div>
<div class="b" style="left:614px;top:710.5px;width:124.5px;height:32px;border:1px solid #e4e4e4"></div>
<div class="t" style="left:628.5px;top:717.5px;font-size:14px;line-height:18px;color:#4a8af4;font-weight:bold">↷</div>
<div class="t" style="left:649px;top:718.5px;font-size:15px;line-height:15px;color:#555;font-weight:normal;line-height:17px">穿透帮助</div>
<div class="b" style="left:474px;top:748.0px;width:124.5px;height:32px;border:1px solid #e4e4e4"></div>
<div class="t" style="left:488.5px;top:755.0px;font-size:14px;line-height:18px;color:#4a8af4;font-weight:bold">œ</div>
<div class="t" style="left:510px;top:756.0px;font-size:15px;line-height:15px;color:#555;font-weight:normal;line-height:17px">编号规则</div>
<div class="b" style="left:614px;top:748.0px;width:124.5px;height:32px;border:1px solid #e4e4e4"></div>
<div class="t" style="left:628.5px;top:756.0px;font-size:16px;line-height:18px;color:#4a8af4;font-weight:bold">~</div>
<div class="t" style="left:643.7px;top:756.0px;font-size:15px;line-height:15px;color:#555;font-weight:normal;line-height:17px">扫码组件</div>
<div class="b" style="left:474px;top:785.5px;width:124.5px;height:32px;border:1px solid #e4e4e4"></div>
<div class="t" style="left:488.5px;top:792.5px;font-size:14px;line-height:18px;color:#4a8af4;font-weight:bold">⋟</div>
<div class="t" style="left:504.6px;top:793.5px;font-size:15px;line-height:15px;color:#555;font-weight:normal;line-height:17px">签名组件</div>
<div class="b" style="left:614px;top:785.5px;width:124.5px;height:32px;border:1px solid #e4e4e4"></div>
<div class="t" style="left:628.5px;top:792.5px;font-size:14px;line-height:18px;color:#4a8af4;font-weight:bold">ω</div>
<div class="t" style="left:648.7px;top:793.5px;font-size:15px;line-height:15px;color:#555;font-weight:normal;line-height:17px">Tag组件</div>
<div class="b" style="left:474px;top:823.0px;width:124.5px;height:32px;border:1px solid #e4e4e4"></div>
<div class="t" style="left:488.5px;top:830.0px;font-size:14px;line-height:18px;color:#4a8af4;font-weight:bold">Æ</div>
<div class="t" style="left:510.8px;top:831.0px;font-size:15px;line-height:15px;color:#555;font-weight:normal;line-height:17px">穿梭组件</div>
<div class="b" style="left:614px;top:823.0px;width:124.5px;height:32px;border:1px solid #e4e4e4"></div>
<div class="t" style="left:628.5px;top:830.0px;font-size:14px;line-height:18px;color:#4a8af4;font-weight:bold">Ê</div>
<div class="t" style="left:645.6px;top:831.0px;font-size:15px;line-height:15px;color:#555;font-weight:normal;line-height:17px">多图上传</div>
<div class="b" style="left:474px;top:860.5px;width:124.5px;height:32px;border:1px solid #e4e4e4"></div>
<div class="t" style="left:488.5px;top:867.5px;font-size:14px;line-height:18px;color:#4a8af4;font-weight:bold">Đ</div>
<div class="t" style="left:506.5px;top:868.5px;font-size:15px;line-height:15px;color:#555;font-weight:normal;line-height:17px">穿透多选</div>
<div class="b" style="left:614px;top:860.5px;width:124.5px;height:32px;border:1px solid #e4e4e4"></div>
<svg style="left:628.5px;top:868.5px" width="15" height="15" viewBox="0 0 15 15"><path d="M0.5 14.5 C3 11 6 6 14.5 1 C11 6 7 10 0.5 14.5Z" fill="#4a8af4" stroke="#4a8af4" stroke-width="1"/></svg>
<div class="t" style="left:650px;top:868.5px;font-size:15px;line-height:15px;color:#555;font-weight:normal;line-height:17px">颜色选择</div>
<div class="b" style="left:474px;top:898.0px;width:124.5px;height:32px;border:1px solid #e4e4e4"></div>
<svg style="left:488.5px;top:907.0px" width="10" height="15" viewBox="0 0 10 15"><path d="M5 1V13 M1.5 9.5 L5 13.5 L8.5 9.5 M2.5 4H7.5" fill="none" stroke="#4a8af4" stroke-width="2"/></svg>
<div class="t" style="left:504px;top:906.0px;font-size:15px;line-height:15px;color:#555;font-weight:normal;line-height:17px">地址选择</div>
<div class="t" style="left:480px;top:955px;font-size:16.25px;line-height:16.25px;color:#111;font-weight:bold;line-height:18px;letter-spacing:0.25px"><span style="font-size:16px;letter-spacing:0.25px">内置组件</span> System control library</div>
<div class="b" style="left:461px;top:982px;width:298px;height:1px;background:#e6e6e6"></div>
<div class="b" style="left:474px;top:992px;width:124.5px;height:32px;border:1px solid #e4e4e4"></div>
<div class="t" style="left:488.5px;top:999px;font-size:14px;line-height:18px;color:#4a8af4;font-weight:bold">ρ</div>
<div class="t" style="left:504.6px;top:1000px;font-size:15px;line-height:15px;color:#555;font-weight:normal;line-height:17px">系统用户</div>
<div class="b" style="left:614px;top:992px;width:124.5px;height:32px;border:1px solid #e4e4e4"></div>
<div class="t" style="left:628.5px;top:999px;font-size:14px;line-height:18px;color:#4a8af4;font-weight:bold">Θ</div>
<div class="t" style="left:647px;top:1000px;font-size:15px;line-height:15px;color:#555;font-weight:normal;line-height:17px">系统角色</div>
<div class="t" style="left:480px;top:1049px;font-size:16.25px;line-height:16.25px;color:#111;font-weight:bold;line-height:18px;letter-spacing:0.25px"><span style="font-size:16px;letter-spacing:0.25px">子表单设计</span> Form control library</div>
<div class="b" style="left:461px;top:1076px;width:298px;height:1px;background:#e6e6e6"></div>
<div class="b" style="left:474px;top:1085.5px;width:124.5px;height:32px;border:1px solid #e4e4e4"></div>
<div class="t" style="left:488.5px;top:1092.5px;font-size:14px;line-height:18px;color:#4a8af4;font-weight:bold">§</div>
<div class="t" style="left:508px;top:1093.5px;font-size:15px;line-height:15px;color:#555;font-weight:normal;line-height:17px">分组线条</div>
<div class="b" style="left:614px;top:1085.5px;width:124.5px;height:32px;border:1px solid #e4e4e4"></div>
<div class="t" style="left:628.5px;top:1092.5px;font-size:14px;line-height:18px;color:#4a8af4;font-weight:bold">§</div>
<div class="t" style="left:648.4px;top:1093.5px;font-size:15px;line-height:15px;color:#555;font-weight:normal;line-height:17px">添加附表</div>
<div class="b" style="left:761px;top:142px;width:1327px;height:899px;border:1px dashed #aaa"></div>
<div class="b" style="left:762px;top:142px;width:1326px;height:48px;border:1px dashed #999"></div>
<div class="b" style="left:1424px;top:142px;width:2px;height:48px;border-left:2px dotted #888"></div>
<div class="t" style="left:667px;width:200px;text-align:right;top:157.5px;font-size:15px;line-height:17px;color:#4a8af4;font-weight:bold">发票代码:</div>
<div class="b" style="left:888.5px;top:148.5px;width:201px;height:36px;border:1px solid #dcdcdc;border-radius:2px;background:#fff"></div>
<div class="t" style="left:901.5px;top:158.5px;font-size:15px;line-height:15px;color:#8f8f8f;font-weight:normal;line-height:17px">请输入信息~</div>
<svg style="left:1100.5px;top:147px" width="16" height="16" viewBox="0 0 16 16"><circle cx="8" cy="8" r="6.9" fill="none" stroke="#ee1111" stroke-width="1.5"/><path d="M4 8H12" stroke="#ee1111" stroke-width="2.4"/></svg>
<svg style="left:2065.5px;top:157px" width="16" height="16" viewBox="0 0 16 16"><circle cx="8" cy="8" r="6.8" fill="none" stroke="#4a86f5" stroke-width="1.5"/><path d="M4 8H12" stroke="#4a86f5" stroke-width="1.5"/></svg>
<div class="b" style="left:762px;top:195.5px;width:1326px;height:47px;border:1px dashed #999"></div>
<div class="b" style="left:1424px;top:195.5px;width:2px;height:47px;border-left:2px dotted #888"></div>
<div class="t" style="left:667px;width:200px;text-align:right;top:211.0px;font-size:15px;line-height:17px;color:#4a8af4;font-weight:bold">开票日期:</div>
<div class="b" style="left:888.5px;top:200.5px;width:201px;height:36px;border:1px solid #dcdcdc;border-radius:2px;background:#fff"></div>
<div class="t" style="left:901.5px;top:210.5px;font-size:15px;line-height:15px;color:#8f8f8f;font-weight:normal;line-height:17px">请输入信息~</div>
<svg style="left:1100.5px;top:200.5px" width="16" height="16" viewBox="0 0 16 16"><circle cx="8" cy="8" r="6.9" fill="none" stroke="#ee1111" stroke-width="1.5"/><path d="M4 8H12" stroke="#ee1111" stroke-width="2.4"/></svg>
<svg style="left:2065.5px;top:210.5px" width="16" height="16" viewBox="0 0 16 16"><circle cx="8" cy="8" r="6.8" fill="none" stroke="#4a86f5" stroke-width="1.5"/><path d="M4 8H12" stroke="#4a86f5" stroke-width="1.5"/></svg>
<div class="b" style="left:762px;top:248px;width:1326px;height:47.5px;border:1px dashed #999"></div>
<div class="b" style="left:1424px;top:248px;width:2px;height:47.5px;border-left:2px dotted #888"></div>
<div class="t" style="left:667px;width:200px;text-align:right;top:263.5px;font-size:15px;line-height:17px;color:#4a8af4;font-weight:bold">购买方名称:</div>
<div class="b" style="left:888.5px;top:253.5px;width:201px;height:36px;border:1px solid #dcdcdc;border-radius:2px;background:#fff"></div>
<div class="t" style="left:901.5px;top:263.5px;font-size:15px;line-height:15px;color:#8f8f8f;font-weight:normal;line-height:17px">请输入信息~</div>
<svg style="left:1100.5px;top:253px" width="16" height="16" viewBox="0 0 16 16"><circle cx="8" cy="8" r="6.9" fill="none" stroke="#ee1111" stroke-width="1.5"/><path d="M4 8H12" stroke="#ee1111" stroke-width="2.4"/></svg>
<div class="t" style="left:1329px;width:200px;text-align:right;top:263.5px;font-size:15px;line-height:17px;color:#4a8af4;font-weight:bold">销售方名称:</div>
<div class="b" style="left:1551px;top:253.5px;width:201px;height:36px;border:1px solid #dcdcdc;border-radius:2px;background:#fff"></div>
<div class="t" style="left:1564px;top:263.5px;font-size:15px;line-height:15px;color:#8f8f8f;font-weight:normal;line-height:17px">请输入信息~</div>
<svg style="left:1763.5px;top:253px" width="16" height="16" viewBox="0 0 16 16"><circle cx="8" cy="8" r="6.9" fill="none" stroke="#ee1111" stroke-width="1.5"/><path d="M4 8H12" stroke="#ee1111" stroke-width="2.4"/></svg>
<svg style="left:2065.5px;top:263px" width="16" height="16" viewBox="0 0 16 16"><circle cx="8" cy="8" r="6.8" fill="none" stroke="#4a86f5" stroke-width="1.5"/><path d="M4 8H12" stroke="#4a86f5" stroke-width="1.5"/></svg>
<div class="b" style="left:762px;top:301.5px;width:1325px;height:51.5px;border:1px dashed #4a86f5;border-left-width:1px"></div>
<div class="b" style="left:762px;top:348.0px;width:1325px;height:1px;border-top:1px dashed #999"></div>
<div class="b" style="left:1424px;top:301.5px;width:2px;height:51.5px;border-left:2px dotted #888"></div>
<div class="t" style="left:672.5px;width:200px;text-align:right;top:317.0px;font-size:15px;line-height:17px;color:#4a8af4;font-weight:bold">购买方识别号:</div>
<div class="b" style="left:894.0px;top:306.5px;width:201px;height:36px;border:1px solid #dcdcdc;border-radius:2px;background:#fff"></div>
<div class="t" style="left:907.0px;top:316.5px;font-size:15px;line-height:15px;color:#8f8f8f;font-weight:normal;line-height:17px">请输入信息~</div>
<svg style="left:1106.0px;top:306.5px" width="16" height="16" viewBox="0 0 16 16"><circle cx="8" cy="8" r="6.9" fill="none" stroke="#ee1111" stroke-width="1.5"/><path d="M4 8H12" stroke="#ee1111" stroke-width="2.4"/></svg>
<div class="t" style="left:1334.5px;width:200px;text-align:right;top:317.0px;font-size:15px;line-height:17px;color:#4a8af4;font-weight:bold">销售方识别号:</div>
<div class="b" style="left:1556.5px;top:306.5px;width:201px;height:36px;border:1px solid #dcdcdc;border-radius:2px;background:#fff"></div>
<div class="t" style="left:1569.5px;top:316.5px;font-size:15px;line-height:15px;color:#8f8f8f;font-weight:normal;line-height:17px">请输入信息~</div>
<svg style="left:1769.0px;top:306.5px" width="16" height="16" viewBox="0 0 16 16"><circle cx="8" cy="8" r="6.9" fill="none" stroke="#ee1111" stroke-width="1.5"/><path d="M4 8H12" stroke="#ee1111" stroke-width="2.4"/></svg>
<svg style="left:2065.5px;top:316.5px" width="16" height="16" viewBox="0 0 16 16"><circle cx="8" cy="8" r="6.8" fill="none" stroke="#4a86f5" stroke-width="1.5"/><path d="M4 8H12" stroke="#4a86f5" stroke-width="1.5"/></svg>
<div class="b" style="left:762px;top:353px;width:1326px;height:47px;border:1px dashed #999"></div>
<div class="b" style="left:1424px;top:353px;width:2px;height:47px;border-left:2px dotted #888"></div>
<div class="t" style="left:667px;width:200px;text-align:right;top:368.5px;font-size:15px;line-height:17px;color:#4a8af4;font-weight:bold">合  计:</div>
<div class="b" style="left:888.5px;top:359.3px;width:201px;height:36px;border:1px solid #dcdcdc;border-radius:2px;background:#fff"></div>
<div class="t" style="left:901.5px;top:369.3px;font-size:15px;line-height:15px;color:#8f8f8f;font-weight:normal;line-height:17px">请输入信息~</div>
<svg style="left:1100.5px;top:358px" width="16" height="16" viewBox="0 0 16 16"><circle cx="8" cy="8" r="6.9" fill="none" stroke="#ee1111" stroke-width="1.5"/><path d="M4 8H12" stroke="#ee1111" stroke-width="2.4"/></svg>
<div class="t" style="left:1329px;width:200px;text-align:right;top:368.5px;font-size:15px;line-height:17px;color:#4a8af4;font-weight:bold">总税额:</div>
<div class="b" style="left:1551px;top:359.3px;width:201px;height:36px;border:1px solid #dcdcdc;border-radius:2px;background:#fff"></div>
<div class="t" style="left:1564px;top:369.3px;font-size:15px;line-height:15px;color:#8f8f8f;font-weight:normal;line-height:17px">请输入信息~</div>
<svg style="left:1763.5px;top:358px" width="16" height="16" viewBox="0 0 16 16"><circle cx="8" cy="8" r="6.9" fill="none" stroke="#ee1111" stroke-width="1.5"/><path d="M4 8H12" stroke="#ee1111" stroke-width="2.4"/></svg>
<svg style="left:2065.5px;top:368px" width="16" height="16" viewBox="0 0 16 16"><circle cx="8" cy="8" r="6.8" fill="none" stroke="#4a86f5" stroke-width="1.5"/><path d="M4 8H12" stroke="#4a86f5" stroke-width="1.5"/></svg>
<div class="b" style="left:762px;top:406px;width:1326px;height:47px;border:1px dashed #999"></div>
<div class="t" style="left:667px;width:200px;text-align:right;top:417.5px;font-size:15px;line-height:17px;color:#4a8af4;font-weight:bold">备注信息:</div>
<div class="b" style="left:888.5px;top:410px;width:189px;height:38px;border:1px solid #dcdcdc;border-radius:2px"></div>
<svg style="left:1066px;top:437px" width="9" height="9" viewBox="0 0 9 9"><path d="M8.5 1L1 8.5M8.5 5L5 8.5" stroke="#555" stroke-width="1.1"/></svg>
<svg style="left:1088px;top:409px" width="16" height="16" viewBox="0 0 16 16"><circle cx="8" cy="8" r="6.9" fill="none" stroke="#ee1111" stroke-width="1.5"/><path d="M4 8H12" stroke="#ee1111" stroke-width="2.4"/></svg>
<svg style="left:2065.5px;top:421px" width="16" height="16" viewBox="0 0 16 16"><circle cx="8" cy="8" r="6.8" fill="none" stroke="#4a86f5" stroke-width="1.5"/><path d="M4 8H12" stroke="#4a86f5" stroke-width="1.5"/></svg>
<div class="b" style="left:765px;top:473px;width:1320px;height:136px;border:1px dashed #4a86f5"></div>
<div class="b" style="left:777px;top:470px;width:193px;height:6px;background:#fff"></div>
<div class="t" style="left:820px;top:464px;font-size:17.5px;line-height:17.5px;color:#4a8af4;font-weight:bold;line-height:22px"><span style="font-size:17px;letter-spacing:0.5px">发票明细</span></div>
<svg style="left:912.5px;top:467.5px" width="16" height="16" viewBox="0 0 16 16"><circle cx="8" cy="8" r="6.9" fill="none" stroke="#ee1111" stroke-width="1.5"/><path d="M4 8H12" stroke="#ee1111" stroke-width="2.4"/></svg>
<div class="b" style="left:777px;top:495px;width:1294.5px;height:51px;background:#f2f2f2;border:1px solid #ddd"></div>
<div class="t" style="left:777.0px;width:143.8px;text-align:center;top:512px;font-size:15px;line-height:18px;color:#747474;font-weight:bold">项目名称</div>
<div class="b" style="left:920.83px;top:496px;width:1px;height:49px;background:#ddd"></div>
<div class="t" style="left:920.83px;width:143.8px;text-align:center;top:512px;font-size:15px;line-height:18px;color:#747474;font-weight:bold">规格型号</div>
<div class="b" style="left:1064.66px;top:496px;width:1px;height:49px;background:#ddd"></div>
<div class="t" style="left:1064.66px;width:143.8px;text-align:center;top:512px;font-size:15px;line-height:18px;color:#747474;font-weight:bold">单 位</div>
<div class="b" style="left:1208.49px;top:496px;width:1px;height:49px;background:#ddd"></div>
<div class="t" style="left:1208.49px;width:143.8px;text-align:center;top:512px;font-size:15px;line-height:18px;color:#747474;font-weight:bold">数 量</div>
<div class="b" style="left:1352.3200000000002px;top:496px;width:1px;height:49px;background:#ddd"></div>
<div class="t" style="left:1352.3200000000002px;width:143.8px;text-align:center;top:512px;font-size:15px;line-height:18px;color:#747474;font-weight:bold">单 价</div>
<div class="b" style="left:1496.15px;top:496px;width:1px;height:49px;background:#ddd"></div>
<div class="t" style="left:1496.15px;width:143.8px;text-align:center;top:512px;font-size:15px;line-height:18px;color:#747474;font-weight:bold">金 额</div>
<div class="b" style="left:1639.98px;top:496px;width:1px;height:49px;background:#ddd"></div>
<div class="t" style="left:1639.98px;width:143.8px;text-align:center;top:512px;font-size:15px;line-height:18px;color:#747474;font-weight:bold">税率/征收率</div>
<div class="b" style="left:1783.81px;top:496px;width:1px;height:49px;background:#ddd"></div>
<div class="t" style="left:1783.81px;width:143.8px;text-align:center;top:512px;font-size:15px;line-height:18px;color:#747474;font-weight:bold">税 额</div>
<div class="b" style="left:1927.64px;top:496px;width:1px;height:49px;background:#ddd"></div>
<div class="t" style="left:1927.64px;width:143.8px;text-align:center;top:512px;font-size:15px;line-height:18px;color:#747474;font-weight:bold">备注</div>
<div class="b" style="left:777px;top:546px;width:1294.5px;height:52.5px;border:1px dashed #888"></div>
<div class="b" style="left:783.0px;top:556px;width:128px;height:36px;border:1px solid #dcdcdc;border-radius:2px;background:#fff"></div>
<div class="t" style="left:796.0px;top:566px;font-size:15px;line-height:15px;color:#8f8f8f;font-weight:normal;line-height:17px">请输入信息~</div>
<div class="b" style="left:919.33px;top:546px;width:2px;height:52.5px;border-left:2px dotted #777"></div>
<div class="b" style="left:926.83px;top:556px;width:128px;height:36px;border:1px solid #dcdcdc;border-radius:2px;background:#fff"></div>
<div class="t" style="left:939.83px;top:566px;font-size:15px;line-height:15px;color:#8f8f8f;font-weight:normal;line-height:17px">请输入信息~</div>
<div class="b" style="left:1063.16px;top:546px;width:2px;height:52.5px;border-left:2px dotted #777"></div>
<div class="b" style="left:1070.66px;top:556px;width:128px;height:36px;border:1px solid #dcdcdc;border-radius:2px;background:#fff"></div>
<div class="t" style="left:1083.66px;top:566px;font-size:15px;line-height:15px;color:#8f8f8f;font-weight:normal;line-height:17px">请输入信息~</div>
<div class="b" style="left:1206.99px;top:546px;width:2px;height:52.5px;border-left:2px dotted #777"></div>
<div class="b" style="left:1214.49px;top:556px;width:128px;height:36px;border:1px solid #dcdcdc;border-radius:2px;background:#fff"></div>
<div class="t" style="left:1227.49px;top:566px;font-size:15px;line-height:15px;color:#8f8f8f;font-weight:normal;line-height:17px">请输入信息~</div>
<div class="b" style="left:1350.8200000000002px;top:546px;width:2px;height:52.5px;border-left:2px dotted #777"></div>
<div class="b" style="left:1358.3200000000002px;top:556px;width:128px;height:36px;border:1px solid #dcdcdc;border-radius:2px;background:#fff"></div>
<div class="t" style="left:1371.3200000000002px;top:566px;font-size:15px;line-height:15px;color:#8f8f8f;font-weight:normal;line-height:17px">请输入信息~</div>
<div class="b" style="left:1494.65px;top:546px;width:2px;height:52.5px;border-left:2px dotted #777"></div>
<div class="b" style="left:1502.15px;top:556px;width:128px;height:36px;border:1px solid #dcdcdc;border-radius:2px;background:#fff"></div>
<div class="t" style="left:1515.15px;top:566px;font-size:15px;line-height:15px;color:#8f8f8f;font-weight:normal;line-height:17px">请输入信息~</div>
<div class="b" style="left:1638.48px;top:546px;width:2px;height:52.5px;border-left:2px dotted #777"></div>
<div class="b" style="left:1645.98px;top:556px;width:128px;height:36px;border:1px solid #dcdcdc;border-radius:2px;background:#fff"></div>
<div class="t" style="left:1658.98px;top:566px;font-size:15px;line-height:15px;color:#8f8f8f;font-weight:normal;line-height:17px">请输入信息~</div>
<div class="b" style="left:1782.31px;top:546px;width:2px;height:52.5px;border-left:2px dotted #777"></div>
<div class="b" style="left:1789.81px;top:556px;width:128px;height:36px;border:1px solid #dcdcdc;border-radius:2px;background:#fff"></div>
<div class="t" style="left:1802.81px;top:566px;font-size:15px;line-height:15px;color:#8f8f8f;font-weight:normal;line-height:17px">请输入信息~</div>
<div class="b" style="left:1926.14px;top:546px;width:2px;height:52.5px;border-left:2px dotted #777"></div>
<div class="b" style="left:1933.64px;top:556px;width:128px;height:36px;border:1px solid #dcdcdc;border-radius:2px;background:#fff"></div>
<div class="t" style="left:1946.64px;top:566px;font-size:15px;line-height:15px;color:#8f8f8f;font-weight:normal;line-height:17px">请输入信息~</div>
<div class="b" style="left:2088px;top:141px;width:451px;height:907px;border-left:1px solid #e6e6e6;border-bottom:1px solid #e6e6e6"></div>
<div class="t" style="left:2096px;top:157px;font-size:15px;line-height:15px;color:#666;font-weight:normal;line-height:18px">字段设置</div>
<div class="b" style="left:2096px;top:185px;width:436px;height:1px;background:#e6e6e6"></div>
<div class="t" style="left:2002px;width:200px;text-align:right;top:204.0px;font-size:15px;line-height:17px;color:#4a8af4;font-weight:bold">唯一标识</div>
<div class="b" style="left:2215.5px;top:196.5px;width:198px;height:36px;border:1px solid #dcdcdc;border-radius:2px;background:#fff"></div>
<div class="t" style="left:2228px;top:206.5px;font-size:15px;line-height:15px;color:#333;font-weight:normal;line-height:17px;overflow:hidden;width:184px">text_20260222153936829</div>
<div class="t" style="left:2002px;width:200px;text-align:right;top:251.0px;font-size:15px;line-height:17px;color:#4a8af4;font-weight:bold">字段标题</div>
<div class="b" style="left:2215.5px;top:243.5px;width:201px;height:36px;border:1px solid #dcdcdc;border-radius:2px;background:#fff"></div>
<div class="t" style="left:2228px;top:253.5px;font-size:15px;line-height:15px;color:#333;font-weight:normal;line-height:17px;overflow:hidden;width:187px">购买方识别号</div>
<div class="t" style="left:2002px;width:200px;text-align:right;top:298.5px;font-size:15px;line-height:17px;color:#4a8af4;font-weight:bold">字段名称</div>
<div class="b" style="left:2215.5px;top:291px;width:201px;height:36px;border:1px solid #dcdcdc;border-radius:2px;background:#fff"></div>
<div class="t" style="left:2228px;top:301px;font-size:15px;line-height:15px;color:#333;font-weight:normal;line-height:17px;overflow:hidden;width:187px">gmfsbh</div>
<div class="t" style="left:2002px;width:200px;text-align:right;top:346.0px;font-size:15px;line-height:17px;color:#4a8af4;font-weight:bold">字段类型</div>
<div class="b" style="left:2215.5px;top:338.5px;width:84px;height:37px;border:1px solid #cfcfcf;border-radius:2px;background:#fff"></div>
<div class="t" style="left:2220.5px;top:348.5px;font-size:15px;line-height:15px;color:#222;font-weight:normal;line-height:17px">varchar</div>
<svg style="left:2281.5px;top:353.5px" width="11" height="7" viewBox="0 0 11 7"><path d="M1 1L5.5 5.5L10 1" fill="none" stroke="#111" stroke-width="1.8"/></svg>
<div class="t" style="left:2002px;width:200px;text-align:right;top:393.5px;font-size:15px;line-height:17px;color:#4a8af4;font-weight:bold">字段长度</div>
<div class="b" style="left:2215.5px;top:386px;width:99px;height:36px;border:1px solid #dcdcdc;border-radius:2px;background:#fff"></div>
<div class="t" style="left:2228px;top:396px;font-size:15px;line-height:15px;color:#333;font-weight:normal;line-height:17px;overflow:hidden;width:85px">255</div>
<div class="t" style="left:2002px;width:200px;text-align:right;top:440.5px;font-size:15px;line-height:17px;color:#4a8af4;font-weight:bold">组件宽度</div>
<div class="b" style="left:2215.5px;top:433px;width:99px;height:36px;border:1px solid #dcdcdc;border-radius:2px;background:#fff"></div>
<div class="t" style="left:2228px;top:443px;font-size:15px;line-height:15px;color:#333;font-weight:normal;line-height:17px;overflow:hidden;width:85px">120</div>
<div class="t" style="left:2422px;top:201px;font-size:19px;line-height:19px;color:#e81010;font-weight:normal;line-height:20px">S</div>
<div class="t" style="left:2002px;width:200px;text-align:right;top:489px;font-size:15px;line-height:17px;color:#4a8af4;font-weight:bold">字段属性</div>
<div class="b" style="left:2215.5px;top:481.5px;width:86px;height:36px;border:1px solid #cfcfcf;border-radius:2px;background:#fff"></div>
<div class="t" style="left:2220.5px;top:491.5px;font-size:15px;line-height:15px;color:#222;font-weight:normal;line-height:17px">非只读</div>
<svg style="left:2283.5px;top:496.5px" width="11" height="7" viewBox="0 0 11 7"><path d="M1 1L5.5 5.5L10 1" fill="none" stroke="#111" stroke-width="1.8"/></svg>
<div class="b" style="left:2302.5px;top:481.5px;width:86px;height:36px;border:1px solid #cfcfcf;border-radius:2px;background:#fff"></div>
<div class="t" style="left:2307.5px;top:491.5px;font-size:15px;line-height:15px;color:#222;font-weight:normal;line-height:17px">非必填</div>
<svg style="left:2370.5px;top:496.5px" width="11" height="7" viewBox="0 0 11 7"><path d="M1 1L5.5 5.5L10 1" fill="none" stroke="#111" stroke-width="1.8"/></svg>
<div class="b" style="left:2389.5px;top:481.5px;width:86px;height:36px;border:1px solid #cfcfcf;border-radius:2px;background:#fff"></div>
<div class="t" style="left:2394.5px;top:491.5px;font-size:15px;line-height:15px;color:#222;font-weight:normal;line-height:17px">不记忆</div>
<svg style="left:2457.5px;top:496.5px" width="11" height="7" viewBox="0 0 11 7"><path d="M1 1L5.5 5.5L10 1" fill="none" stroke="#111" stroke-width="1.8"/></svg>
<div class="b" style="left:2215.5px;top:522.5px;width:86px;height:36.5px;border:1px solid #cfcfcf;border-radius:2px;background:#fff"></div>
<div class="t" style="left:2220.5px;top:532.5px;font-size:15px;line-height:15px;color:#222;font-weight:normal;line-height:17px">非唯一</div>
<svg style="left:2283.5px;top:537.5px" width="11" height="7" viewBox="0 0 11 7"><path d="M1 1L5.5 5.5L10 1" fill="none" stroke="#111" stroke-width="1.8"/></svg>
<div class="b" style="left:2302.5px;top:522.5px;width:86px;height:36.5px;border:1px solid #cfcfcf;border-radius:2px;background:#fff"></div>
<div class="t" style="left:2307.5px;top:532.5px;font-size:15px;line-height:15px;color:#222;font-weight:normal;line-height:17px">字段显示</div>
<svg style="left:2370.5px;top:537.5px" width="11" height="7" viewBox="0 0 11 7"><path d="M1 1L5.5 5.5L10 1" fill="none" stroke="#111" stroke-width="1.8"/></svg>
<div class="b" style="left:2389.5px;top:522.5px;width:88px;height:36.5px;border:1px solid #cfcfcf;border-radius:2px;background:#fff"></div>
<div class="t" style="left:2394.5px;top:532.5px;font-size:15px;line-height:15px;color:#222;font-weight:normal;line-height:17px">不隐藏</div>
<svg style="left:2459.5px;top:537.5px" width="11" height="7" viewBox="0 0 11 7"><path d="M1 1L5.5 5.5L10 1" fill="none" stroke="#111" stroke-width="1.8"/></svg>
<div class="t" style="left:2002px;width:200px;text-align:right;top:589.5px;font-size:15px;line-height:17px;color:#4a8af4;font-weight:bold">帮助信息</div>
<div class="b" style="left:2215.5px;top:582px;width:201px;height:37px;border:1px solid #dcdcdc;border-radius:2px;background:#fff"></div>
<div class="t" style="left:2002px;width:200px;text-align:right;top:638.0px;font-size:15px;line-height:17px;color:#4a8af4;font-weight:bold">验证规则</div>
<div class="b" style="left:2215.5px;top:630.5px;width:203px;height:37px;border:1px solid #dcdcdc;border-radius:2px;background:#fff"></div>
<div class="t" style="left:2427px;top:635.5px;font-size:19px;line-height:19px;color:#e81010;font-weight:normal;line-height:21px">配</div>
<div class="t" style="left:2002px;width:200px;text-align:right;top:685.0px;font-size:15px;line-height:17px;color:#4a8af4;font-weight:bold">验证提示</div>
<div class="b" style="left:2215.5px;top:677.5px;width:201px;height:37px;border:1px solid #dcdcdc;border-radius:2px;background:#fff"></div>
<div class="t" style="left:2002px;width:200px;text-align:right;top:733.0px;font-size:15px;line-height:17px;color:#4a8af4;font-weight:bold">后缀内容</div>
<div class="b" style="left:2215.5px;top:725.5px;width:201px;height:37px;border:1px solid #dcdcdc;border-radius:2px;background:#fff"></div>
<div class="t" style="left:2002px;width:200px;text-align:right;top:780.0px;font-size:15px;line-height:17px;color:#4a8af4;font-weight:bold">默认内容</div>
<div class="b" style="left:2215.5px;top:772.5px;width:203px;height:37px;border:1px solid #dcdcdc;border-radius:2px;background:#fff"></div>
<div class="t" style="left:2427px;top:777.5px;font-size:19px;line-height:19px;color:#e81010;font-weight:normal;line-height:21px">配</div>
<div class="t" style="left:2002px;width:200px;text-align:right;top:827.5px;font-size:15px;line-height:17px;color:#4a8af4;font-weight:bold">占位内容</div>
<div class="b" style="left:2215.5px;top:820px;width:201px;height:37px;border:1px solid #dcdcdc;border-radius:2px;background:#fff"></div>
<div class="t" style="left:2002px;width:200px;text-align:right;top:874.5px;font-size:15px;line-height:17px;color:#4a8af4;font-weight:bold">规则引擎</div>
<div class="b" style="left:2215.5px;top:867px;width:203px;height:37px;border:1px solid #dcdcdc;border-radius:2px;background:#fff"></div>
<div class="t" style="left:2427px;top:872px;font-size:19px;line-height:19px;color:#e81010;font-weight:normal;line-height:21px">配</div>
<div class="t" style="left:2002px;width:200px;text-align:right;top:922.5px;font-size:15px;line-height:17px;color:#4a8af4;font-weight:bold">Ai提示</div>
<div class="b" style="left:2215.5px;top:915px;width:201px;height:36px;border:1px solid #dcdcdc;border-radius:2px;background:#fff"></div>
<div class="t" style="left:2228px;top:925px;font-size:15px;line-height:15px;color:#999;font-weight:normal;line-height:17px;overflow:hidden;width:187px">您可以设置Ai提示帮助，将休</div>
<div class="b" style="left:2112.5px;top:958.5px;width:60.5px;height:33.5px;background:#4a89f7;border-radius:3px"></div>
<div class="t" style="left:2112.5px;top:966px;font-size:15px;line-height:15px;color:#fff;font-weight:normal;width:60px;text-align:center;line-height:17px">保存</div>
<div class="t" style="left:53.0px;top:64.0px;font-size:20.5px;line-height:22px;color:rgba(140,140,140,0.10);transform-origin:0 100%;transform:rotate(-20.8deg)">ld:12026-04-28gadmin</div>
<div class="t" style="left:499.5px;top:64.0px;font-size:20.5px;line-height:22px;color:rgba(140,140,140,0.10);transform-origin:0 100%;transform:rotate(-20.8deg)">ld:12026-04-28gadmin</div>
<div class="t" style="left:946.0px;top:64.0px;font-size:20.5px;line-height:22px;color:rgba(140,140,140,0.10);transform-origin:0 100%;transform:rotate(-20.8deg)">ld:12026-04-28gadmin</div>
<div class="t" style="left:1392.5px;top:64.0px;font-size:20.5px;line-height:22px;color:rgba(140,140,140,0.10);transform-origin:0 100%;transform:rotate(-20.8deg)">ld:12026-04-28gadmin</div>
<div class="t" style="left:1839.0px;top:64.0px;font-size:20.5px;line-height:22px;color:rgba(140,140,140,0.10);transform-origin:0 100%;transform:rotate(-20.8deg)">ld:12026-04-28gadmin</div>
<div class="t" style="left:2285.5px;top:64.0px;font-size:20.5px;line-height:22px;color:rgba(140,140,140,0.10);transform-origin:0 100%;transform:rotate(-20.8deg)">ld:12026-04-28gadmin</div>
<div class="t" style="left:53.0px;top:226.5px;font-size:20.5px;line-height:22px;color:rgba(140,140,140,0.10);transform-origin:0 100%;transform:rotate(-20.8deg)">ld:12026-04-28gadmin</div>
<div class="t" style="left:499.5px;top:226.5px;font-size:20.5px;line-height:22px;color:rgba(140,140,140,0.10);transform-origin:0 100%;transform:rotate(-20.8deg)">ld:12026-04-28gadmin</div>
<div class="t" style="left:946.0px;top:226.5px;font-size:20.5px;line-height:22px;color:rgba(140,140,140,0.10);transform-origin:0 100%;transform:rotate(-20.8deg)">ld:12026-04-28gadmin</div>
<div class="t" style="left:1392.5px;top:226.5px;font-size:20.5px;line-height:22px;color:rgba(140,140,140,0.10);transform-origin:0 100%;transform:rotate(-20.8deg)">ld:12026-04-28gadmin</div>
<div class="t" style="left:1839.0px;top:226.5px;font-size:20.5px;line-height:22px;color:rgba(140,140,140,0.10);transform-origin:0 100%;transform:rotate(-20.8deg)">ld:12026-04-28gadmin</div>
<div class="t" style="left:2285.5px;top:226.5px;font-size:20.5px;line-height:22px;color:rgba(140,140,140,0.10);transform-origin:0 100%;transform:rotate(-20.8deg)">ld:12026-04-28gadmin</div>
<div class="t" style="left:53.0px;top:389.0px;font-size:20.5px;line-height:22px;color:rgba(140,140,140,0.10);transform-origin:0 100%;transform:rotate(-20.8deg)">ld:12026-04-28gadmin</div>
<div class="t" style="left:499.5px;top:389.0px;font-size:20.5px;line-height:22px;color:rgba(140,140,140,0.10);transform-origin:0 100%;transform:rotate(-20.8deg)">ld:12026-04-28gadmin</div>
<div class="t" style="left:946.0px;top:389.0px;font-size:20.5px;line-height:22px;color:rgba(140,140,140,0.10);transform-origin:0 100%;transform:rotate(-20.8deg)">ld:12026-04-28gadmin</div>
<div class="t" style="left:1392.5px;top:389.0px;font-size:20.5px;line-height:22px;color:rgba(140,140,140,0.10);transform-origin:0 100%;transform:rotate(-20.8deg)">ld:12026-04-28gadmin</div>
<div class="t" style="left:1839.0px;top:389.0px;font-size:20.5px;line-height:22px;color:rgba(140,140,140,0.10);transform-origin:0 100%;transform:rotate(-20.8deg)">ld:12026-04-28gadmin</div>
<div class="t" style="left:2285.5px;top:389.0px;font-size:20.5px;line-height:22px;color:rgba(140,140,140,0.10);transform-origin:0 100%;transform:rotate(-20.8deg)">ld:12026-04-28gadmin</div>
<div class="t" style="left:53.0px;top:551.5px;font-size:20.5px;line-height:22px;color:rgba(140,140,140,0.10);transform-origin:0 100%;transform:rotate(-20.8deg)">ld:12026-04-28gadmin</div>
<div class="t" style="left:499.5px;top:551.5px;font-size:20.5px;line-height:22px;color:rgba(140,140,140,0.10);transform-origin:0 100%;transform:rotate(-20.8deg)">ld:12026-04-28gadmin</div>
<div class="t" style="left:946.0px;top:551.5px;font-size:20.5px;line-height:22px;color:rgba(140,140,140,0.10);transform-origin:0 100%;transform:rotate(-20.8deg)">ld:12026-04-28gadmin</div>
<div class="t" style="left:1392.5px;top:551.5px;font-size:20.5px;line-height:22px;color:rgba(140,140,140,0.10);transform-origin:0 100%;transform:rotate(-20.8deg)">ld:12026-04-28gadmin</div>
<div class="t" style="left:1839.0px;top:551.5px;font-size:20.5px;line-height:22px;color:rgba(140,140,140,0.10);transform-origin:0 100%;transform:rotate(-20.8deg)">ld:12026-04-28gadmin</div>
<div class="t" style="left:2285.5px;top:551.5px;font-size:20.5px;line-height:22px;color:rgba(140,140,140,0.10);transform-origin:0 100%;transform:rotate(-20.8deg)">ld:12026-04-28gadmin</div>
<div class="t" style="left:53.0px;top:714.0px;font-size:20.5px;line-height:22px;color:rgba(140,140,140,0.10);transform-origin:0 100%;transform:rotate(-20.8deg)">ld:12026-04-28gadmin</div>
<div class="t" style="left:499.5px;top:714.0px;font-size:20.5px;line-height:22px;color:rgba(140,140,140,0.10);transform-origin:0 100%;transform:rotate(-20.8deg)">ld:12026-04-28gadmin</div>
<div class="t" style="left:946.0px;top:714.0px;font-size:20.5px;line-height:22px;color:rgba(140,140,140,0.10);transform-origin:0 100%;transform:rotate(-20.8deg)">ld:12026-04-28gadmin</div>
<div class="t" style="left:1392.5px;top:714.0px;font-size:20.5px;line-height:22px;color:rgba(140,140,140,0.10);transform-origin:0 100%;transform:rotate(-20.8deg)">ld:12026-04-28gadmin</div>
<div class="t" style="left:1839.0px;top:714.0px;font-size:20.5px;line-height:22px;color:rgba(140,140,140,0.10);transform-origin:0 100%;transform:rotate(-20.8deg)">ld:12026-04-28gadmin</div>
<div class="t" style="left:2285.5px;top:714.0px;font-size:20.5px;line-height:22px;color:rgba(140,140,140,0.10);transform-origin:0 100%;transform:rotate(-20.8deg)">ld:12026-04-28gadmin</div>
</body></html>
